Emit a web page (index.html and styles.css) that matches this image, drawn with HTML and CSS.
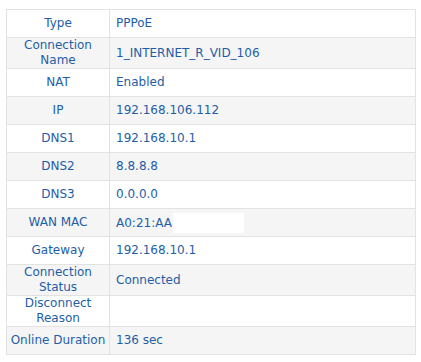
FILE: index.html
```html
<!DOCTYPE html>
<html>
<head>
<meta charset="utf-8">
<link rel="stylesheet" href="styles.css">
</head>
<body>
<table class="info">
  <tr><td class="label">Type</td><td class="value">PPPoE</td></tr>
  <tr class="alt"><td class="label">Connection<br>Name</td><td class="value">1_INTERNET_R_VID_106</td></tr>
  <tr><td class="label">NAT</td><td class="value">Enabled</td></tr>
  <tr class="alt"><td class="label">IP</td><td class="value">192.168.106.112</td></tr>
  <tr><td class="label">DNS1</td><td class="value">192.168.10.1</td></tr>
  <tr class="alt"><td class="label">DNS2</td><td class="value">8.8.8.8</td></tr>
  <tr><td class="label">DNS3</td><td class="value">0.0.0.0</td></tr>
  <tr class="alt"><td class="label">WAN MAC</td><td class="value">A0:21:AA<span class="mask"></span></td></tr>
  <tr><td class="label">Gateway</td><td class="value">192.168.10.1</td></tr>
  <tr class="alt"><td class="label">Connection<br>Status</td><td class="value">Connected</td></tr>
  <tr><td class="label">Disconnect<br>Reason</td><td class="value"></td></tr>
  <tr class="alt"><td class="label">Online Duration</td><td class="value">136 sec</td></tr>
</table>
</body>
</html>
```

FILE: styles.css
```css
html, body {
  margin: 0;
  padding: 0;
  background: #ffffff;
}
body {
  padding: 9px 5px 0 6px;
  font-family: "DejaVu Sans", Verdana, sans-serif;
  font-size: 12px;
  color: #1e5ea8;
}
.info {
  border-collapse: collapse;
  width: 410px;
  table-layout: fixed;
}
.info td {
  border: 1px solid #e2e2e2;
  height: 27px;
  padding: 0;
  line-height: 15px;
  vertical-align: middle;
}
.info tr.alt td {
  background: #f5f5f5;
}
.label {
  width: 102px;
  text-align: center;
}
.value {
  text-align: left;
  padding-left: 6px !important;
}
.mask {
  display: inline-block;
  width: 71px;
  height: 20px;
  margin-left: 1px;
  background: #ffffff;
  vertical-align: middle;
}
```
